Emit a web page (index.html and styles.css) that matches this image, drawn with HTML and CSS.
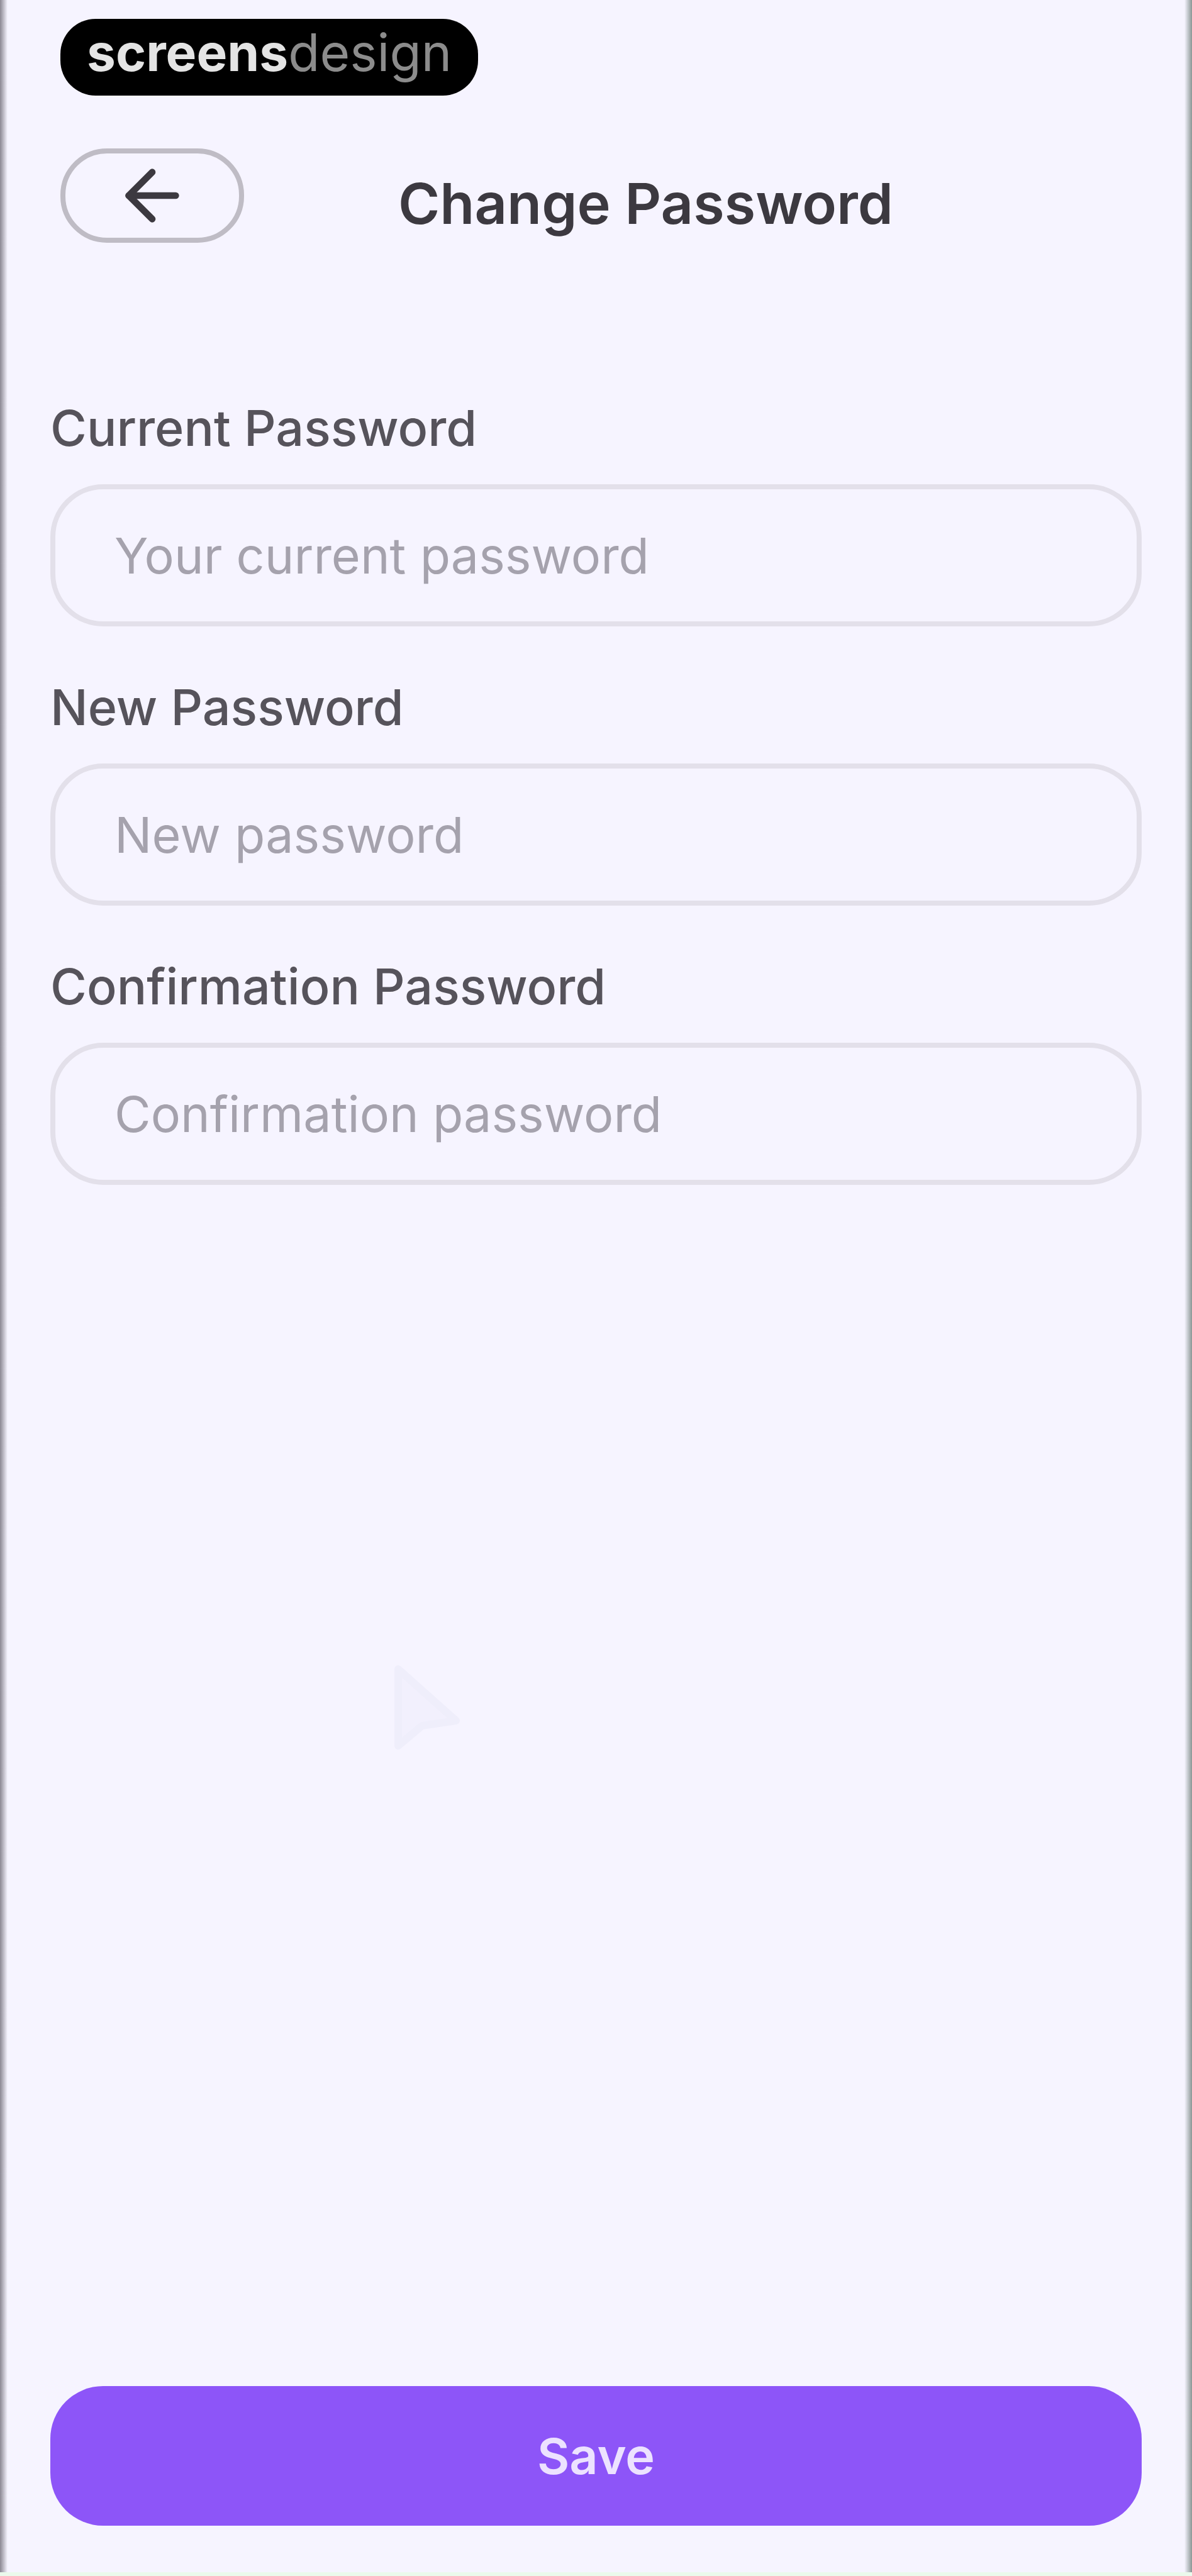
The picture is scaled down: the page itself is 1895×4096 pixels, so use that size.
FILE: index.html
```html
<!DOCTYPE html>
<html lang="en">
<head>
  <meta charset="UTF-8" />
  <meta name="viewport" content="width=device-width, initial-scale=1.0" />
  <title>Change Password</title>
  <link rel="stylesheet" href="styles.css">
</head>
<body>
  <div class="screen">
    <div class="brand"><span class="brand-bold">screens</span><span class="brand-light">design</span></div>

    <header class="header">
      <button type="button" class="back-button" aria-label="Back">
        <svg class="back-icon" viewBox="0 0 24 24" fill="none" stroke="currentColor" stroke-width="2" stroke-linecap="round" stroke-linejoin="round">
          <path d="M19 12H5" />
          <path d="M12 19l-7-7 7-7" />
        </svg>
      </button>
      <h1 class="title">Change Password</h1>
    </header>

    <form class="form">
      <div class="field">
        <label for="current-password">Current Password</label>
        <input type="password" id="current-password" placeholder="Your current password" />
      </div>
      <div class="field">
        <label for="new-password">New Password</label>
        <input type="password" id="new-password" placeholder="New password" />
      </div>
      <div class="field">
        <label for="confirm-password">Confirmation Password</label>
        <input type="password" id="confirm-password" placeholder="Confirmation password" />
      </div>
      <button type="submit" class="save-button">Save</button>
    </form>

    <svg class="pointer" viewBox="0 0 108 138" aria-hidden="true">
      <path d="M8 8v122l38-32 54-8z" />
    </svg>
  </div>
</body>
</html>
```

FILE: styles.css
```css
* {
  box-sizing: border-box;
}

body {
  margin: 0;
  background-color: #f6f4ff;
  color: #3c3940;
  font-family: Inter, "Liberation Sans", sans-serif;
}

.screen {
  position: relative;
  display: flex;
  flex-direction: column;
  min-height: 100vh;
  padding: 30px 80px 74px;
  border-bottom: 6px solid #eafaec;
  background:
    linear-gradient(to right, #8b8893, #f6f4ff) left / 12px 100% no-repeat,
    linear-gradient(to left, #8a9694, #f6f4ff) right / 12px 100% no-repeat;
}

.brand {
  align-self: flex-start;
  height: 122px;
  margin-left: 16px;
  padding: 0 42px;
  border-radius: 56px;
  background-color: #000;
  font-size: 82px;
  line-height: 108px;
}

.brand-bold {
  color: #e4e4e4;
  font-weight: 700;
}

.brand-light {
  color: #8c8c8c;
}

.header {
  display: flex;
  align-items: flex-start;
  margin-top: 84px;
  padding-left: 16px;
}

.back-button {
  display: flex;
  align-items: center;
  justify-content: center;
  width: 292px;
  height: 150px;
  border: 8px solid #bfbcc5;
  border-radius: 74px;
  background: none;
  color: #3c3940;
  cursor: pointer;
}

.back-icon {
  width: 128px;
  height: 128px;
}

.title {
  flex: 1;
  margin: 0;
  padding: 24px 150px 0 0;
  font-size: 90px;
  font-weight: 600;
  line-height: 128px;
  text-align: center;
}

.form {
  display: flex;
  flex: 1;
  flex-direction: column;
  gap: 76px;
  margin-top: 240px;
}

.field {
  display: flex;
  flex-direction: column;
  gap: 38px;
}

.field label {
  color: #56535b;
  font-size: 79px;
  font-weight: 500;
  line-height: 104px;
}

.field input {
  width: 100%;
  height: 226px;
  padding: 0 94px;
  border: 8px solid #e3e0ea;
  border-radius: 84px;
  background: none;
  color: #3c3940;
  font-family: inherit;
  font-size: 79px;
}

.field input::placeholder {
  color: #a5a2ad;
  opacity: 1;
}

.save-button {
  height: 222px;
  margin-top: auto;
  border: none;
  border-radius: 84px;
  background-color: #8d55f8;
  color: #ece2ff;
  font-family: inherit;
  font-size: 79px;
  font-weight: 600;
  cursor: pointer;
}

/* faint pointer left over the empty part of the screen */
.pointer {
  position: absolute;
  top: 2646px;
  left: 33%;
  width: 108px;
  fill: #f2f0fd;
  stroke: #efeefb;
  stroke-width: 12;
  stroke-linejoin: round;
  pointer-events: none;
}
```
